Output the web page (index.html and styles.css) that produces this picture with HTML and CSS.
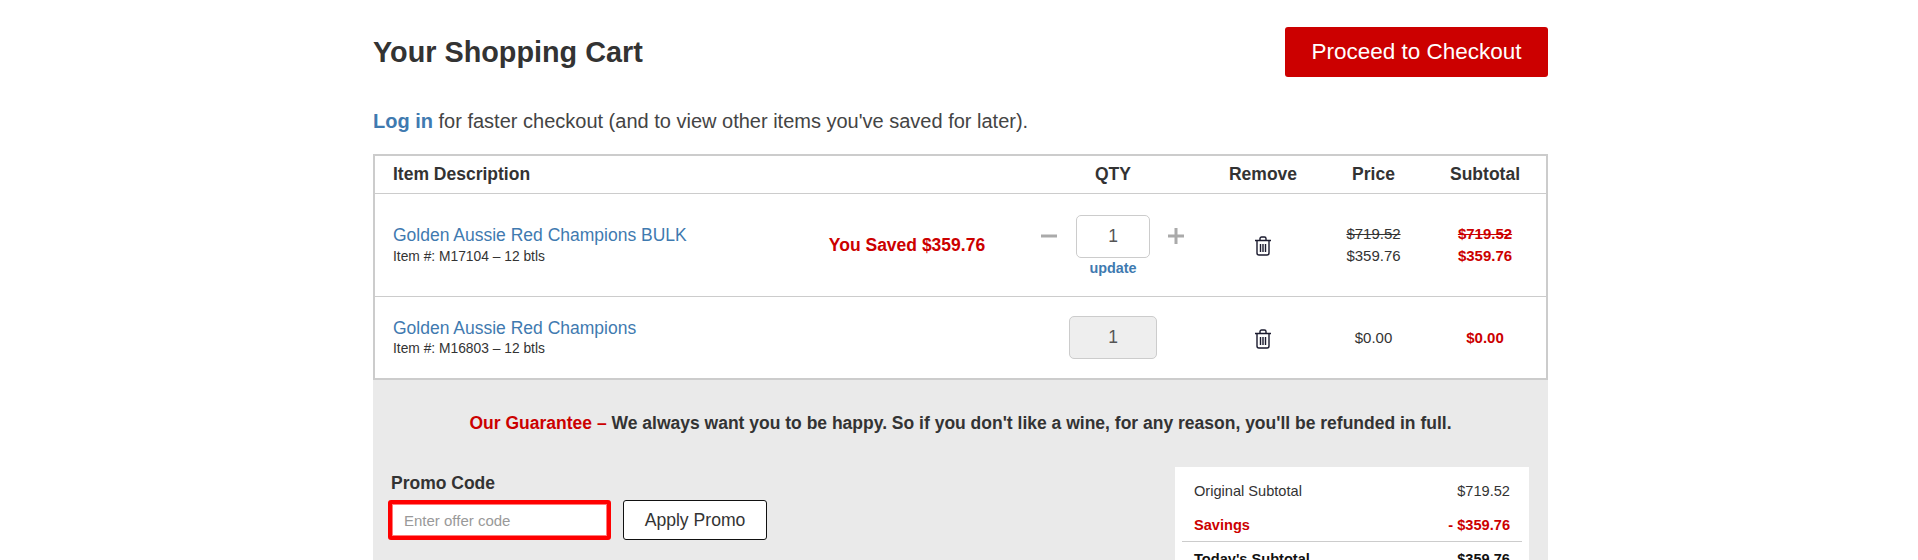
FILE: index.html
```html
<!DOCTYPE html>
<html lang="en">
<head>
<meta charset="utf-8">
<title>Your Shopping Cart</title>
<link rel="stylesheet" href="styles.css">
</head>
<body>
<main class="cart">
  <header class="cart-head">
    <h1>Your Shopping Cart</h1>
    <a class="checkout" href="#">Proceed to Checkout</a>
  </header>
  <p class="login"><a href="#">Log in</a> for faster checkout (and to view other items you've saved for later).</p>
  <section class="table">
    <div class="row head-row">
      <div class="desc">Item Description</div>
      <div></div>
      <div class="c">QTY</div>
      <div class="c">Remove</div>
      <div class="c">Price</div>
      <div class="c">Subtotal</div>
    </div>
    <div class="row item item-a">
      <div class="desc"><a class="name" href="#">Golden Aussie Red Champions BULK</a><div class="sku">Item #: M17104 – 12 btls</div></div>
      <div class="saved">You Saved $359.76</div>
      <div class="qty-cell">
        <div class="stepper">
          <svg class="step" viewBox="0 0 18 18"><path d="M0 9h16" /></svg>
          <div class="qty">1</div>
          <svg class="step" viewBox="0 0 18 18"><path d="M1 9h16M9 1v16" /></svg>
        </div>
        <a class="update" href="#">update</a>
      </div>
      <div class="c"><svg class="trash" viewBox="0 0 18 20"><path d="M1 4.500h16M6 4.500V2.600C6 1.700 6.700 1 7.600 1h2.800c.9 0 1.600.7 1.600 1.600v1.900M3 4.500v12.600c0 1 .8 1.900 1.900 1.900h8.200c1 0 1.900-.9 1.900-1.900V4.500M6.500 8v8M9 8v8M11.500 8v8"/></svg></div>
      <div class="c price"><s>$719.52</s><br>$359.76</div>
      <div class="c price red"><s>$719.52</s><br>$359.76</div>
    </div>
    <div class="row item item-b">
      <div class="desc"><a class="name" href="#">Golden Aussie Red Champions</a><div class="sku">Item #: M16803 – 12 btls</div></div>
      <div></div>
      <div class="qty-cell"><div class="qty locked">1</div></div>
      <div class="c"><svg class="trash" viewBox="0 0 18 20"><path d="M1 4.500h16M6 4.500V2.600C6 1.700 6.700 1 7.600 1h2.800c.9 0 1.600.7 1.600 1.600v1.900M3 4.500v12.600c0 1 .8 1.900 1.900 1.900h8.200c1 0 1.900-.9 1.900-1.900V4.500M6.500 8v8M9 8v8M11.500 8v8"/></svg></div>
      <div class="c price">$0.00</div>
      <div class="c price red">$0.00</div>
    </div>
  </section>
  <section class="panel">
    <p class="guarantee"><span class="red">Our Guarantee –</span> We always want you to be happy. So if you don't like a wine, for any reason, you'll be refunded in full.</p>
    <div class="panel-body">
      <form class="promo">
        <label class="promo-label" for="code">Promo Code</label>
        <div class="promo-row">
          <input id="code" class="promo-input" placeholder="Enter offer code">
          <button type="button" class="promo-btn">Apply Promo</button>
        </div>
      </form>
      <aside class="summary">
        <div class="sum-row"><span>Original Subtotal</span><span>$719.52</span></div>
        <div class="sum-row red strong"><span>Savings</span><span>- $359.76</span></div>
        <div class="sum-row total strong"><span>Today's Subtotal</span><span>$359.76</span></div>
      </aside>
    </div>
  </section>
</main>
</body>
</html>
```
FILE: styles.css
```css
* { box-sizing: border-box; }
html, body { margin: 0; height: 560px; overflow: hidden; background: #fff; }
body { font-family: "Liberation Sans", Arial, sans-serif; color: #333; font-size: 14px; }
a { text-decoration: none; color: #3f7ab0; }
.red { color: #c00; }
.cart { width: 1175px; margin-left: 373px; }
.cart-head { display: flex; justify-content: space-between; align-items: flex-start; padding-top: 27px; height: 100px; }
h1 { margin: 9px 0 0; font-size: 28.800px; line-height: 32px; font-weight: 700; }
.checkout { display: flex; align-items: center; justify-content: center; width: 263px; height: 50px; background: #c00; color: #fff; border-radius: 3px; font-size: 22.500px; }
.login { margin: 0; height: 54px; padding-top: 11px; font-size: 20px; line-height: 20px; color: #444; }
.login a { font-weight: 700; }
.table { border: 2px solid #ccc; background: #fff; height: 226px; }
.row { display: grid; grid-template-columns: 1fr 232px 180px 120px 101px 122px; align-items: center; }
.head-row { height: 38px; border-bottom: 1px solid #ccc; font-size: 17.500px; font-weight: 700; }
.item-a { height: 103px; border-bottom: 1px solid #ccc; }
.item-b { height: 81px; }
.desc { padding-left: 18px; }
.c { text-align: center; }
.name { font-size: 17.500px; line-height: 20px; display: block; }
.item-a .name { margin-top: -1px; }
.sku { font-size: 13.800px; line-height: 16px; margin-top: 3px; }
.item-a .sku { margin-top: 4px; }
.saved { color: #c00; font-size: 17.500px; font-weight: 700; text-align: center; }
.qty-cell { display: flex; flex-direction: column; align-items: center; }
.stepper { display: flex; align-items: center; gap: 17px; }
.step { width: 18px; height: 18px; fill: none; stroke: #aaa; stroke-width: 3; }
.qty { width: 74px; height: 43px; border: 1px solid #ccc; border-radius: 5px; display: flex; align-items: center; justify-content: center; font-size: 17.500px; color: #555; background: #fff; }
.locked { width: 88px; background: #eee; }
.update { font-size: 14.400px; font-weight: 700; line-height: 16px; margin-top: 2px; }
.trash { width: 18px; height: 20px; fill: none; stroke: #1a1a2e; stroke-width: 1.4; display: block; margin: 2px auto 0; }
.price { font-size: 15px; line-height: 22px; }
.price.red { font-weight: 700; }
.panel { background: #eaeaea; padding: 0 18px; height: 200px; }
.guarantee { margin: 0; height: 87px; padding-top: 33px; text-align: center; font-size: 17.500px; line-height: 20px; font-weight: 700; }
.panel-body { display: flex; justify-content: space-between; align-items: flex-start; }
.promo { padding-top: 6px; margin-left: -3px; }
.promo-label { display: block; font-size: 17.500px; font-weight: 700; line-height: 20px; margin-left: 3px; margin-bottom: 7px; }
.promo-row { display: flex; gap: 12px; }
.promo-input { width: 223px; height: 40px; border: 4px solid #f00; border-radius: 3px; padding: 0 12px; font: 15px "Liberation Sans", Arial, sans-serif; background: #fff; outline: none; box-shadow: inset 0 0 0 1px #ff7a7a; }
.promo-input::placeholder { color: #999; opacity: 1; }
.promo-btn { width: 144px; height: 40px; border: 1px solid #111; border-radius: 3px; background: #fff; color: #333; font: 17.600px "Liberation Sans", Arial, sans-serif; }
.summary { width: 354px; margin-right: 1px; background: #fff; padding: 14px 7px 8px; }
.sum-row { display: flex; justify-content: space-between; padding: 0 12px; font-size: 14.600px; line-height: 20px; margin-bottom: 14px; }
.strong { font-weight: 700; }
.total { border-top: 1px solid #ccc; padding-top: 7px; color: #111; margin-top: -8px; }
```
